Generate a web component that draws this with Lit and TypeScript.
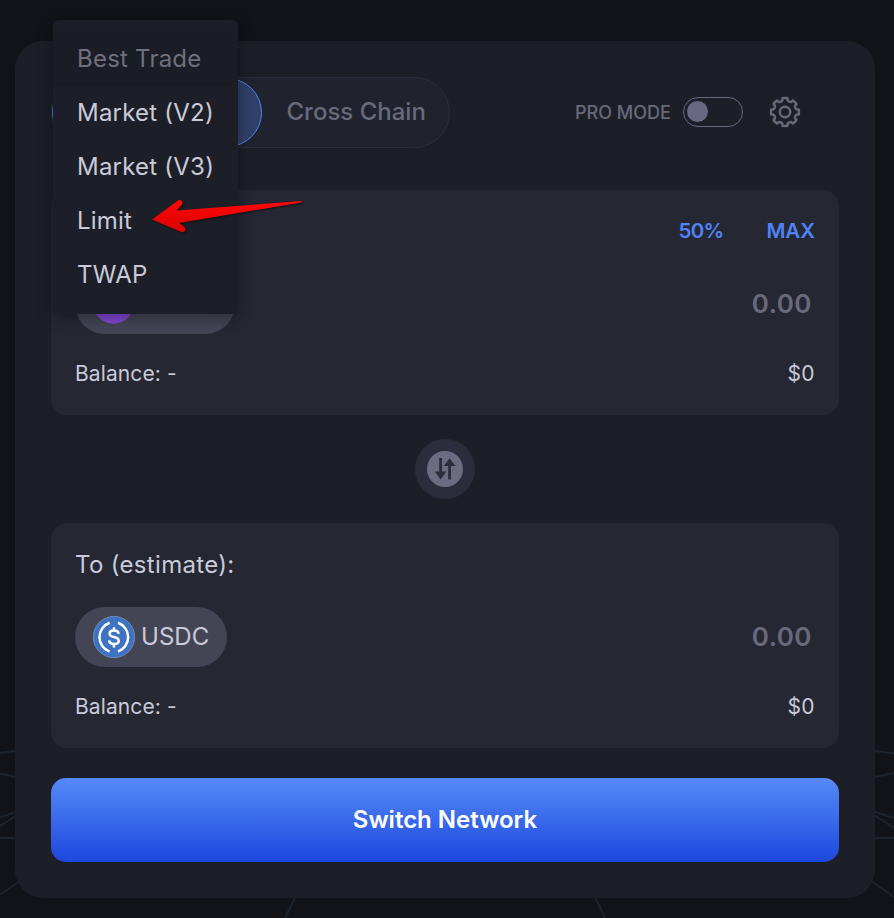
import { LitElement, html, css, svg } from "lit";
import { customElement, property } from "lit/decorators.js";

@customElement("token-panel")
class TokenPanel extends LitElement {
  @property() label = "";
  @property() token = "";
  @property({ type: Boolean }) shortcuts = false;

  static styles = css`
    :host { display: flex; flex-direction: column; box-sizing: border-box; height: 225px; padding: 24px; border-radius: 16px; background: #252733; color: #c9cada; }
    .row { display: flex; align-items: center; justify-content: space-between; }
    .head { height: 34px; font-size: 24px; letter-spacing: 0.32px; }
    .quick { display: flex; gap: 43px; padding-bottom: 2px; font-size: 20.5px; font-weight: 600; letter-spacing: 0; color: #4f83f5; }
    .quick span:first-child { letter-spacing: -0.7px; }
    .middle { height: 60px; margin-top: 26px; }
    .chip { display: flex; align-items: center; box-sizing: border-box; height: 60px; padding: 0 18px; gap: 6px; border-radius: 30px; background: #434554; font-size: 24px; letter-spacing: 0.05px; }
    .chip span { padding-bottom: 2px; }
    .chip svg { display: block; width: 42px; height: 42px; }
    .amount { padding: 0 3px 2px 0; font-size: 26px; font-weight: 600; letter-spacing: 0.5px; color: #686a7b; }
    .foot { height: 30px; margin-top: 24px; font-size: 21px; letter-spacing: 0.1px; }
    .foot span:last-child { padding-right: 0.5px; }
  `;

  private icon() {
    if (this.token === "USDC") {
      return svg`<svg viewBox="0 0 42 42"><circle cx="21" cy="21" r="20.7" fill="#3e73c4" stroke="#9db4d8" stroke-width=".5"/>
        <g fill="none" stroke="#fff" stroke-width="2.5">
          <path d="M16.6 6.8A15.3 15.3 0 0 0 16.6 35.6M25 6.8A15.3 15.3 0 0 1 25 35.6"/>
          <path d="M25.6 17.8C25.4 15.6 23.8 14.6 21 14.6C18.2 14.6 16.6 15.8 16.6 17.7C16.6 20 18.5 20.5 21 21C23.8 21.5 25.7 22.3 25.7 24.7C25.7 26.9 23.9 28 21 28C18 28 16.3 26.8 16.1 24.4M21 11.2V14.6M21 28V31.6"/></g></svg>`;
    }
    return svg`<svg viewBox="0 0 42 42"><circle cx="20.5" cy="20" r="20.7" fill="#8247d5"/>
      <path d="M12 15l6-4 6 4v7l-6 4-6-4zM22 26.5l4 3 5-3.5v-6" fill="none" stroke="#fff" stroke-width="2.2"/></svg>`;
  }

  render() {
    return html`
      <div class="row head">
        <span>${this.label}</span>
        ${this.shortcuts ? html`<div class="quick"><span>50%</span><span>MAX</span></div>` : ""}
      </div>
      <div class="row middle">
        <div class="chip">${this.icon()}<span>${this.token}</span></div>
        <span class="amount">0.00</span>
      </div>
      <div class="row foot"><span>Balance: -</span><span>$0</span></div>
    `;
  }
}

@customElement("app-root")
class AppRoot extends LitElement {
  static styles = css`
    :host { display: block; position: relative; width: 894px; height: 918px; overflow: hidden; box-sizing: border-box; padding: 41px 19px 20px 15px; background: #121318; font-family: Inter, "Liberation Sans", sans-serif; }
    .backdrop { position: absolute; inset: 0; }
    .card { position: relative; box-sizing: border-box; height: 857px; padding: 36px; border-radius: 28px; background: #1d1f28; display: flex; flex-direction: column; }
    .top { display: flex; align-items: center; height: 71px; margin-bottom: 42px; }
    .tabs { display: flex; box-sizing: border-box; width: 399px; height: 71px; border: 1px solid #2b2d3d; border-radius: 36px; background: #20232e; }
    .active { box-sizing: border-box; width: 210px; height: 69px; border: 1px solid #4f83f5; border-radius: 35px; background: #31406a; }
    .tab { flex: 1; display: flex; align-items: center; padding: 0 0 2px 24.5px; font-size: 24px; font-weight: 500; letter-spacing: 0; color: #686a7b; white-space: nowrap; }
    .options { flex: 1; display: flex; align-items: center; height: 30px; margin-bottom: 2px; }
    .pro { margin-left: 125px; width: 108px; padding-top: 2px; font-size: 18px; font-weight: 500; letter-spacing: 0; color: #686a7b; white-space: nowrap; }
    .toggle { display: flex; box-sizing: border-box; width: 60px; height: 30px; padding: 3px; border: 1px solid #686883; border-radius: 15px; }
    .knob { width: 21px; height: 21px; border-radius: 50%; background: #686883; }
    .gear { display: block; width: 32px; height: 32px; margin-left: 26px; }
    .swap { align-self: center; display: flex; align-items: center; justify-content: center; width: 60px; height: 60px; margin: 24px 0; border-radius: 50%; background: #2b2d3c; }
    .swap svg { display: block; width: 36px; height: 36px; }
    .submit { display: flex; align-items: center; justify-content: center; box-sizing: border-box; height: 84px; padding-bottom: 2px; margin-top: 30px; border-radius: 15px; background: linear-gradient(#568af8, #1c48de); color: #fff; font-size: 24px; font-weight: 600; letter-spacing: 0; }
    .menu { position: absolute; left: 53px; top: 20px; box-sizing: border-box; width: 185px; height: 294px; padding: 12px 0; border-radius: 6px; background: #1d1f28; box-shadow: 0 3px 15px rgba(0, 0, 0, 0.4); color: #c9cada; font-size: 24px; letter-spacing: 0.22px; }
    .item { height: 54px; line-height: 54px; padding-left: 24px; white-space: nowrap; }
    .item.disabled { background: #1b1d26; color: #6e707d; }
    .arrow { position: absolute; left: 148px; top: 192px; width: 160px; height: 48px; filter: drop-shadow(1px 1px 1px rgba(0, 0, 0, 0.55)); }
  `;

  private gearPath() {
    const point = (r: number, deg: number) => {
      const a = (deg * Math.PI) / 180;
      return `${(16 + r * Math.sin(a)).toFixed(2)} ${(16 - r * Math.cos(a)).toFixed(2)}`;
    };
    let d = "";
    for (let i = 0; i < 8; i++) {
      const a = i * 45;
      d += `${i ? "L" : "M"}${point(11.6, a - 14)}L${point(14, a - 10)}Q${point(14.2, a)} ${point(14, a + 10)}L${point(11.6, a + 14)}Q${point(10.6, a + 22.5)} ${point(11.6, a + 31)}`;
    }
    return d + "Z";
  }

  render() {
    return html`
      <svg class="backdrop" width="894" height="918" fill="none" stroke="#1c242f" stroke-width="2">
        <path d="M0 753L15 751M0 773.5L15 777M0 817.5L15 812M0 826L15 816.5M0 838H15M0 894.5L19 882M295 898L285 918"/>
        <path d="M875 751L894 753.5M875 777L894 773M875 812L894 818M875 815.5L894 828M875 838H894M871 881L894 897M595.5 898L605 918"/>
      </svg>
      <main class="card">
        <div class="top">
          <div class="tabs"><div class="active"></div><div class="tab">Cross Chain</div></div>
          <div class="options">
            <span class="pro">PRO MODE</span>
            <div class="toggle"><div class="knob"></div></div>
            <svg class="gear" viewBox="0 0 32 32" fill="none" stroke="#686a7b" stroke-width="2.4" stroke-linejoin="round">
              <path d=${this.gearPath()}/><circle cx="16" cy="16" r="5.2"/>
            </svg>
          </div>
        </div>
        <token-panel token="MATIC" shortcuts></token-panel>
        <div class="swap">
          <svg viewBox="0 0 36 36"><circle cx="18" cy="18" r="18" fill="#6b6c81"/>
            <path fill="#2b2d3c" d="M12.2 7H15V20.5H19.3L13.6 28.5L7.8 20.5H12.2ZM21.2 28.5V15H16.8L22.6 7.2L28.5 15H24V28.5Z"/></svg>
        </div>
        <token-panel label="To (estimate):" token="USDC"></token-panel>
        <div class="submit">Switch Network</div>
      </main>
      <div class="menu">
        <div class="item disabled">Best Trade</div>
        <div class="item">Market (V2)</div>
        <div class="item">Market (V3)</div>
        <div class="item">Limit</div>
        <div class="item">TWAP</div>
      </div>
      <svg class="arrow" viewBox="148 192 160 48">
        <defs><linearGradient id="red" x2="0" y2="1"><stop stop-color="#ff0808"/><stop offset="1" stop-color="#d90000"/></linearGradient></defs>
        <path fill="url(#red)" d="M152 219.5L178 200.6C181 198.8 184 202 181.8 205L176.5 210.5L301 201Q303 201.5 301 202.5L179 223L184 226.5C187.5 229 185 233.5 181 232Z"/>
      </svg>
    `;
  }
}
